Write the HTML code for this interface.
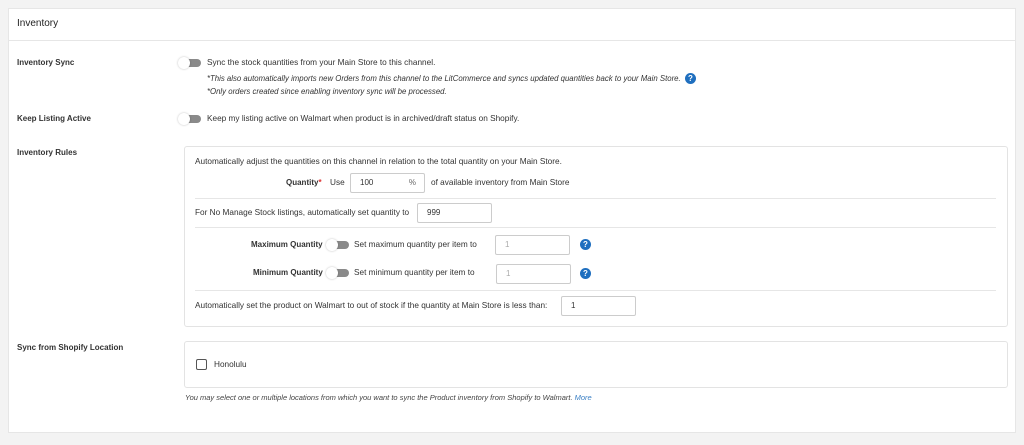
<!DOCTYPE html>
<html><head><style>
body{margin:0;width:1024px;height:445px;background:#f3f3f3;font-family:"Liberation Sans",sans-serif;color:#333;position:relative;overflow:hidden}
.card{position:absolute;left:8px;top:8px;width:1008px;height:425px;background:#fff;border:1px solid #e6e6e6;box-sizing:border-box}
.a{position:absolute;white-space:nowrap;font-size:8.25px;line-height:10px}
.b{font-weight:bold;color:#333;font-size:8px}
.i{font-style:italic;font-size:7.8px}
.tg{position:absolute;width:24px;height:10px}
.tg:before{content:"";position:absolute;left:6px;top:1px;width:17px;height:8px;border-radius:4px;background:#8a8a8a}
.tg:after{content:"";position:absolute;left:0;top:-1px;width:12px;height:12px;border-radius:6px;background:#fff;box-shadow:0 0 2px rgba(0,0,0,.25)}
.box{position:absolute;border:1px solid #e3e3e3;border-radius:3px;background:#fff}
.in{position:absolute;border:1px solid #ccc;border-radius:2px;background:#fff;font-size:8px;line-height:18px;padding-left:9px;box-sizing:border-box;height:20px}
.q{position:absolute;width:11px;height:11px;border-radius:6px;background:#1f6fbf;color:#fff;font-size:8px;line-height:11px;text-align:center;font-weight:bold}
.hr{position:absolute;height:1px;background:#e6e6e6}
</style></head><body>
<div class="card"></div>
<div class="a" style="left:17px;top:18px;font-size:10px;line-height:12px;color:#222">Inventory</div>
<div class="hr" style="left:9px;top:40px;width:1006px"></div>

<div class="a b" style="left:17px;top:58px">Inventory Sync</div>
<div class="tg" style="left:178px;top:58px"></div>
<div class="a" style="left:207px;top:58px">Sync the stock quantities from your Main Store to this channel.</div>
<div class="a i" style="left:207px;top:74px">*This also automatically imports new Orders from this channel to the LitCommerce and syncs updated quantities back to your Main Store.</div>
<div class="q" style="left:685px;top:73px">?</div>
<div class="a i" style="left:207px;top:87px">*Only orders created since enabling inventory sync will be processed.</div>

<div class="a b" style="left:17px;top:114px">Keep Listing Active</div>
<div class="tg" style="left:178px;top:114px"></div>
<div class="a" style="left:207px;top:114px">Keep my listing active on Walmart when product is in archived/draft status on Shopify.</div>

<div class="a b" style="left:17px;top:148px">Inventory Rules</div>
<div class="box" style="left:184px;top:146px;width:822px;height:179px"></div>
<div class="a" style="left:195px;top:157px">Automatically adjust the quantities on this channel in relation to the total quantity on your Main Store.</div>
<div class="a b" style="left:286px;top:178px">Quantity<span style="color:#d33">*</span></div>
<div class="a" style="left:330px;top:178px">Use</div>
<div class="in" style="left:350px;top:173px;width:75px">100<span style="position:absolute;right:8px;color:#666">%</span></div>
<div class="a" style="left:431px;top:178px">of available inventory from Main Store</div>
<div class="hr" style="left:195px;top:198px;width:801px"></div>
<div class="a" style="left:195px;top:208px">For No Manage Stock listings, automatically set quantity to</div>
<div class="in" style="left:417px;top:203px;width:75px">999</div>
<div class="hr" style="left:195px;top:227px;width:801px"></div>
<div class="a b" style="left:251px;top:240px">Maximum Quantity</div>
<div class="tg" style="left:326px;top:240px"></div>
<div class="a" style="left:354px;top:240px">Set maximum quantity per item to</div>
<div class="in" style="left:495px;top:235px;width:75px;color:#aaa">1</div>
<div class="q" style="left:580px;top:239px">?</div>
<div class="a b" style="left:253px;top:268px">Minimum Quantity</div>
<div class="tg" style="left:326px;top:268px"></div>
<div class="a" style="left:354px;top:268px">Set minimum quantity per item to</div>
<div class="in" style="left:496px;top:264px;width:75px;color:#aaa">1</div>
<div class="q" style="left:580px;top:268px">?</div>
<div class="hr" style="left:195px;top:290px;width:801px"></div>
<div class="a" style="left:195px;top:301px">Automatically set the product on Walmart to out of stock if the quantity at Main Store is less than:</div>
<div class="in" style="left:561px;top:296px;width:75px">1</div>

<div class="a b" style="left:17px;top:343px">Sync from Shopify Location</div>
<div class="box" style="left:184px;top:341px;width:822px;height:45px"></div>
<div style="position:absolute;left:196px;top:359px;width:9px;height:9px;border:1.5px solid #555;border-radius:2px"></div>
<div class="a" style="left:214px;top:360px">Honolulu</div>
<div class="a i" style="left:185px;top:393px;font-size:7.5px;color:#444">You may select one or multiple locations from which you want to sync the Product inventory from Shopify to Walmart. <span style="color:#3a7fc4">More</span></div>
</body></html>
